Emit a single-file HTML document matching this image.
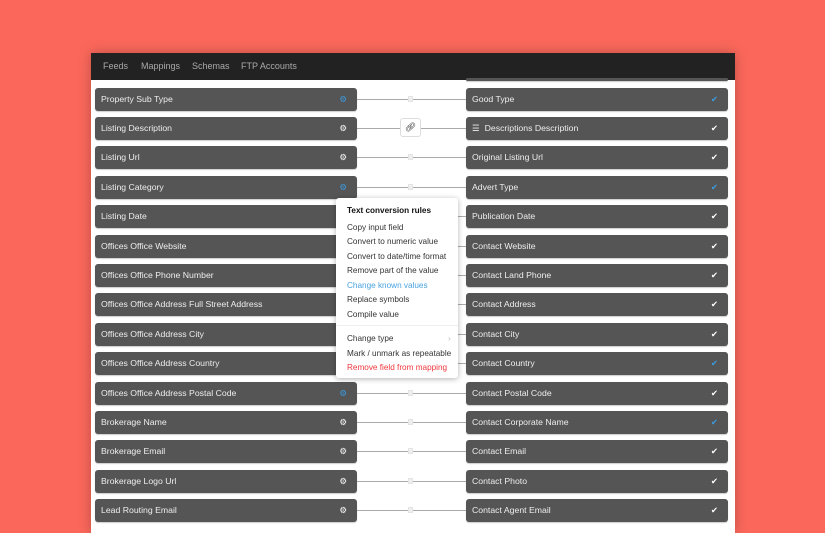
<!DOCTYPE html>
<html><head><meta charset="utf-8"><style>
*{margin:0;padding:0;box-sizing:border-box}
body{width:825px;height:525px;background:#fb685b;font-family:"Liberation Sans",Arial,sans-serif;position:relative;overflow:hidden}
.panel{position:absolute;left:91px;top:53px;width:644px;height:480px;background:#fff;box-shadow:0 0 12px rgba(0,0,0,.25)}
.nav{position:absolute;left:0;top:0;width:644px;height:27px;background:#222;}
.nav span{position:absolute;top:8px;font-size:9px;color:#aaa}
.box{position:absolute;height:23px;background:#555;border-radius:3px;color:#eee;font-size:8.7px;line-height:23px;padding-left:6px;box-shadow:0 1px 1px rgba(0,0,0,.2)}
.l{left:4px;width:262px}.r{left:375px;width:262px}
.ic{position:absolute;right:10px;top:0;font-size:8.5px;color:#fff}
.blue{color:#3a9be0}
.line{position:absolute;left:266px;width:109px;height:1px;background:#aaa}
.sq{position:absolute;left:317px;width:5px;height:6px;background:#eee;border:1px solid #e4e4e4}
.menu{position:absolute;left:245px;top:145px;width:122px;height:180px;background:#fff;border-radius:3px;box-shadow:0 1px 6px rgba(0,0,0,.3);font-size:8.2px;color:#333}
.menu div{position:absolute;left:11px;white-space:nowrap}
</style></head><body>
<div class="panel">
<div class="nav"><span style="left:12px">Feeds</span><span style="left:50px">Mappings</span><span style="left:101px">Schemas</span><span style="left:150px">FTP Accounts</span></div>
<div class="box r" style="top:25px;height:3px"></div>
<div id="rows"></div>
<div style="position:absolute;left:309px;top:65px;width:21px;height:19px;background:#fff;border:1px solid #ddd;border-radius:3px;font-size:9px;text-align:center;line-height:17px;color:#333">&#x1F517;&#xFE0E;</div>
<div class="menu">
<div style="top:8px;font-weight:bold;color:#111">Text conversion rules</div>
<div style="top:25px">Copy input field</div>
<div style="top:39px">Convert to numeric value</div>
<div style="top:54px">Convert to date/time format</div>
<div style="top:68px">Remove part of the value</div>
<div style="top:83px;color:#4aa3e0">Change known values</div>
<div style="top:97px">Replace symbols</div>
<div style="top:112px">Compile value</div>
<div style="top:127px;left:0;width:122px;height:1px;background:#eee"></div>
<div style="top:136px">Change type</div>
<div style="top:136px;left:112px;color:#bbb">›</div>
<div style="top:151px">Mark / unmark as repeatable</div>
<div style="top:165px;color:#f0363c">Remove field from mapping</div>
</div>
</div>
<script>
var L=["Property Sub Type","Listing Description","Listing Url","Listing Category","Listing Date","Offices Office Website","Offices Office Phone Number","Offices Office Address Full Street Address","Offices Office Address City","Offices Office Address Country","Offices Office Address Postal Code","Brokerage Name","Brokerage Email","Brokerage Logo Url","Lead Routing Email"];
var R=["Good Type","&#9776;&nbsp; Descriptions Description","Original Listing Url","Advert Type","Publication Date","Contact Website","Contact Land Phone","Contact Address","Contact City","Contact Country","Contact Postal Code","Contact Corporate Name","Contact Email","Contact Photo","Contact Agent Email"];
var lb=[0,3,10],rb=[0,3,9,11],h="";
for(var i=0;i<15;i++){var t=34.5+i*29.4,c=t+11;
if(i<4||i>9){h+='<div class="line" style="top:'+c+'px"></div>';if(i!=1)h+='<div class="sq" style="top:'+(c-3)+'px"></div>';}
else h+='<div class="line" style="left:350px;width:25px;top:'+c+'px"></div>';
h+='<div class="box l" style="top:'+t+'px">'+L[i]+'<span class="ic'+(lb.indexOf(i)>=0?' blue':'')+'">&#9881;&#xFE0E;</span></div>';
h+='<div class="box r" style="top:'+t+'px">'+R[i]+'<span class="ic'+(rb.indexOf(i)>=0?' blue':'')+'">&#10004;&#xFE0E;</span></div>';}
document.getElementById("rows").innerHTML=h;
</script>
</body></html>
